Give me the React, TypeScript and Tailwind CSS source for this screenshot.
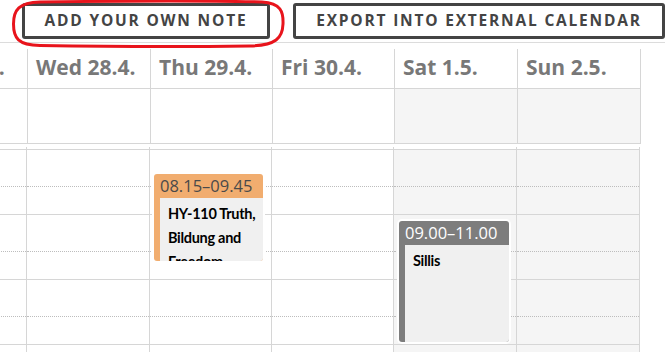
import React from "react";

interface Day {
  label: string;
  w: number;
  weekend: boolean;
}

const days: Day[] = [
  { label: "Tue 27.4.", w: 123, weekend: false },
  { label: "Wed 28.4.", w: 123, weekend: false },
  { label: "Thu 29.4.", w: 122, weekend: false },
  { label: "Fri 30.4.", w: 122, weekend: false },
  { label: "Sat 1.5.", w: 123, weekend: true },
  { label: "Sun 2.5.", w: 123, weekend: true },
];

const hours = [0, 1, 2, 3];

function HourRow() {
  return (
    <div className="flex flex-col">
      <div className="h-[37px] border-b border-dotted border-[#bdbdbd]" />
      <div className="h-[28px] border-b border-[#d6d6d6]" />
    </div>
  );
}

function Event({
  time,
  title,
  color,
  timeColor,
  className,
}: {
  time: string;
  title: string;
  color: string;
  timeColor: string;
  className: string;
}) {
  return (
    <div
      className={`absolute z-10 flex flex-col overflow-hidden rounded-[3px] ring-2 ring-white ${color} ${className}`}
    >
      <div className={`h-[24px] shrink-0 pl-[6px] text-[16.5px] leading-[24px] ${timeColor}`}>
        {time}
      </div>
      <div
        className="ml-[6px] flex-1 bg-[#f0f0f0] pl-[8px] pt-[4px] text-[14.5px] font-bold leading-[24px] tracking-[-0.3px] text-black"
        style={{ fontFamily: 'Lato, "Open Sans", sans-serif' }}
      >
        {title}
      </div>
    </div>
  );
}

export default function App() {
  return (
    <div
      className="relative h-[352px] w-[665px] overflow-hidden bg-white"
      style={{ fontFamily: '"Open Sans", "Noto Sans", sans-serif' }}
    >
      {/* toolbar */}
      <div className="flex h-[43px] gap-[23px] border-b border-[#dcdcdc] pl-[22px] pt-[3px]">
        <button className="h-[36px] w-[248px] rounded-[3px] border-[3px] border-[#444] text-[15.5px] font-bold tracking-[1.8px] text-[#444]">
          ADD YOUR OWN NOTE
        </button>
        <button className="h-[36px] w-[372px] rounded-[3px] border-[3px] border-[#444] text-[15.5px] font-bold tracking-[1.8px] text-[#444]">
          EXPORT INTO EXTERNAL CALENDAR
        </button>
      </div>

      {/* red annotation */}
      <svg
        className="pointer-events-none absolute left-0 top-0"
        width="300"
        height="50"
        viewBox="0 0 300 50"
      >
        <path
          d="M40 2 C120 1 200 0.5 262 2 C281 3 283.5 12 283 24 C282.5 38 276 45.5 250 46 C180 47 100 46.5 40 45.5 C18 45 13.5 38 13.5 24 C13.5 10 19 2.5 40 2 Z"
          fill="none"
          stroke="#e8141c"
          strokeWidth="3"
        />
      </svg>

      {/* day header */}
      <div className="ml-[-95px] mt-[6px] flex">
        {days.map((d) => (
          <div
            key={d.label}
            style={{ width: d.w }}
            className="shrink-0 border-r border-[#d6d6d6]"
          >
            <div className="h-[40px] border-b border-[#d6d6d6] pl-[8px] pt-[4px] text-[21px] font-bold leading-[28px] text-[#787878]">
              {d.label}
            </div>
            <div
              className={`h-[55px] border-b border-[#d6d6d6] ${d.weekend ? "bg-[#f5f5f5]" : ""}`}
            />
          </div>
        ))}
      </div>

      {/* body */}
      <div className="ml-[-96px] mt-[3px] flex">
        {days.map((d) => (
          <div
            key={d.label}
            style={{ width: d.w }}
            className={`relative shrink-0 border-r border-[#d6d6d6] ${d.weekend ? "bg-[#f5f5f5]" : ""}`}
          >
            <div className="h-[2px] bg-white" />
            <div className="h-px bg-[#d6d6d6]" />
            {hours.map((h) => (
              <HourRow key={h} />
            ))}
            {d.label === "Thu 29.4." && (
              <Event
                time="08.15–09.45"
                title="HY-110 Truth, Bildung and Freedom"
                color="bg-[#f1ad6f]"
                timeColor="text-[#4a4a4a]"
                className="left-[4px] top-[27px] h-[87px] w-[109px]"
              />
            )}
            {d.label === "Sat 1.5." && (
              <Event
                time="09.00–11.00"
                title="Sillis"
                color="bg-[#7d7d7d]"
                timeColor="text-white"
                className="left-[5px] top-[74px] h-[121px] w-[110px]"
              />
            )}
          </div>
        ))}
      </div>
    </div>
  );
}
